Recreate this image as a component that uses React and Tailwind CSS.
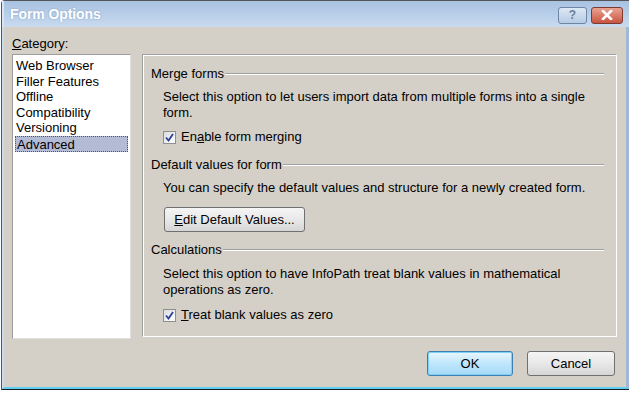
import React from "react";

const font = { fontFamily: '"Liberation Sans", Arial, sans-serif' };

function Check() {
  return (
    <span className="inline-flex items-center justify-center w-[13px] h-[13px] border border-[#8f8f8f] bg-gradient-to-br from-[#dcdcdc] to-[#ffffff] mr-[5px]">
      <svg width="11" height="11" viewBox="0 0 11 11">
        <path d="M2 5.5 L4.5 8.5 L9 2" fill="none" stroke="#2a3f9a" strokeWidth="1.8" />
      </svg>
    </span>
  );
}

function GroupHead({ children }) {
  return (
    <div className="flex items-center h-[16px] pr-[2px]">
      <span className="pr-[1px]">{children}</span>
      <div className="flex-1 h-[2px] border-t border-[#a0a0a0] border-b-white border-b" />
    </div>
  );
}

export default function App() {
  const items = ["Web Browser", "Filler Features", "Offline", "Compatibility", "Versioning", "Advanced"];
  return (
    <div className="w-[630px] h-[394px] bg-white relative overflow-hidden text-[13px] text-black" style={font}>
      <div className="w-[628px] h-[390px] ml-[1px] border-t border-l border-[#555] rounded-tl-[4px] flex flex-col bg-[#d4d0c8]">
        <div className="h-[29px] flex items-center justify-between bg-gradient-to-b from-[#a8c2e2] to-[#c9daee] border-l-[2px] border-[#d8e6f4] pl-[6px] pr-[6px]">
          <span className="text-white font-bold text-[14px] tracking-[-0.1px] [text-shadow:0_0_2px_#7d9ac0]">Form Options</span>
          <div className="flex gap-[4px] items-center pt-[2px]">
            <div className="w-[29px] h-[17px] rounded-[3px] border border-[#6d86a6] bg-gradient-to-b from-[#dce8f5] to-[#b6cbe3] flex items-center justify-center text-[#6b7f99] font-bold text-[12px] leading-none">?</div>
            <div className="w-[32px] h-[17px] rounded-[3px] border border-[#7d3a30] bg-gradient-to-b from-[#e9a293] to-[#c8543f] flex items-center justify-center">
              <svg width="14" height="10" viewBox="0 0 14 10">
                <path d="M3 1 L11 9 M11 1 L3 9" stroke="#fff" strokeWidth="2.6" strokeLinecap="square" />
              </svg>
            </div>
          </div>
        </div>
        <div className="flex-1 flex flex-col border-l-[2px] border-l-[#c8dcf0] border-r-[3px] border-r-[#9fb8d6] border-b-[2px] border-b-[#5fd0ef]">
          <div className="flex-1 flex pl-[8px] pr-[8px] pt-[7px]">
            <div className="w-[119px] flex flex-col">
              <div className="h-[20px]"><span className="underline">C</span>ategory:</div>
              <div className="h-[285px] bg-white border border-[#9d9d9d] border-r-[#e0e0e0] border-b-[#e0e0e0] pt-[3px] pl-[2px] pr-[2px]">
                {items.map((it, i) => (
                  <div
                    key={it}
                    className={
                      "h-[15.6px] leading-[15.6px] pl-[1px] " +
                      (i === 5 ? "bg-[#b4bbd5] border border-dotted border-[#555] leading-[13.6px]" : "")
                    }
                  >
                    {it}
                  </div>
                ))}
              </div>
            </div>
            <div className="ml-[11px] mt-[20px] w-[475px] h-[283px] border border-[#a0a0a0] border-r-white border-b-white shadow-[inset_1px_1px_0_#fff] pl-[8px] pr-[10px] pt-[11px]">
              <GroupHead>Merge forms</GroupHead>
              <div className="pl-[12px] pt-[7px] leading-[16px]">
                Select this option to let users import data from multiple forms into a single form.
              </div>
              <div className="pl-[12px] pt-[5px] flex items-center h-[22px] box-content">
                <Check />
                <span>En<span className="underline">a</span>ble form merging</span>
              </div>
              <div className="pt-[9px]">
                <GroupHead>Default values for form</GroupHead>
              </div>
              <div className="pl-[12px] pt-[7px] leading-[16px]">
                You can specify the default values and structure for a newly created form.
              </div>
              <div className="pl-[13px] pt-[11px]">
                <div className="w-[141px] h-[25px] rounded-[3px] border border-[#707070] bg-gradient-to-b from-[#f5f5f5] via-[#e8e8e8] to-[#d6d6d6] flex items-center justify-center">
                  <span><span className="underline">E</span>dit Default Values...</span>
                </div>
              </div>
              <div className="pt-[10px]">
                <GroupHead>Calculations</GroupHead>
              </div>
              <div className="pl-[12px] pt-[8px] leading-[16px] pr-[30px]">
                Select this option to have InfoPath treat blank values in mathematical operations as zero.
              </div>
              <div className="pl-[12px] pt-[6px] flex items-center h-[22px] box-content">
                <Check />
                <span><span className="underline">T</span>reat blank values as zero</span>
              </div>
            </div>
          </div>
          <div className="h-[48px] flex justify-end items-start pt-[12px] pr-[11px] gap-[14px]">
            <div className="w-[86px] h-[25px] rounded-[3px] border border-[#3c7fb1] bg-gradient-to-b from-[#eaf6fd] via-[#bee6fd] to-[#a7d9f5] shadow-[inset_0_0_0_1px_#7fd0f6] flex items-center justify-center">OK</div>
            <div className="w-[88px] h-[25px] rounded-[3px] border border-[#707070] bg-gradient-to-b from-[#f5f5f5] via-[#e8e8e8] to-[#d6d6d6] flex items-center justify-center">Cancel</div>
          </div>
        </div>
        <div className="h-[1px] bg-[#1a1a24]" />
      </div>
    </div>
  );
}
